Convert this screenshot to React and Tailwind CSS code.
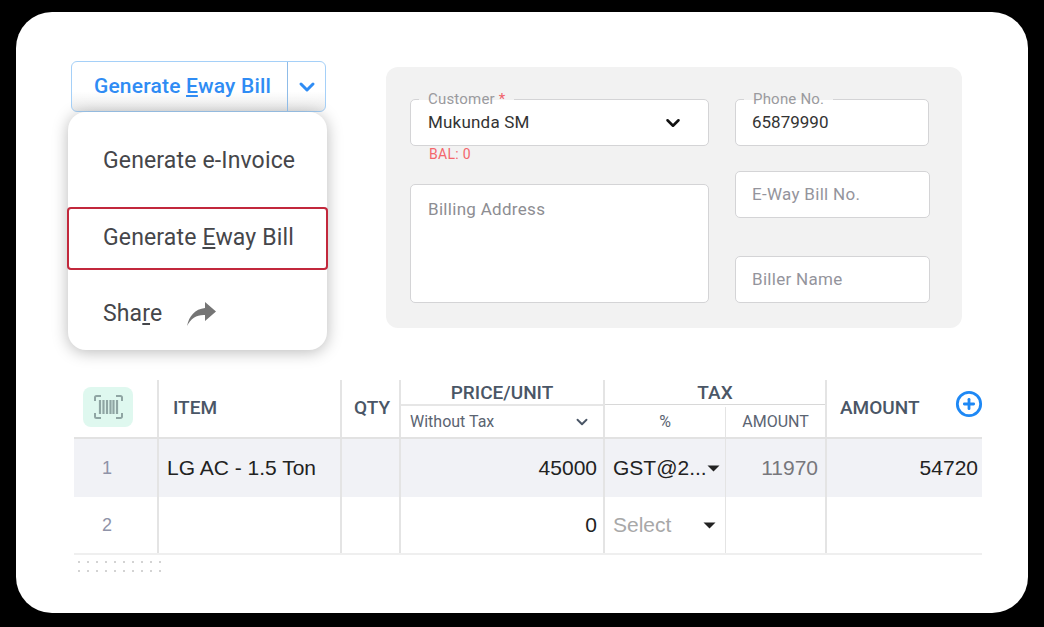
import { ChevronDown, CirclePlus } from 'lucide-react'

const COLS = 'grid-cols-[85px_183px_59px_204px_121px_101px_155px]'

const Caret = () => (
  <svg width="13" height="7" viewBox="0 0 13 7" className="shrink-0">
    <path d="M0.500 0.500h12L6.500 6.500z" fill="#222" />
  </svg>
)

const ScanIcon = () => (
  <svg width="29" height="24" viewBox="0 0 29 24" fill="none" stroke="#8fa5a3" strokeWidth="2">
    <path d="M1 6V2.500A1.500 1.500 0 0 1 2.500 1H7M22 1h4.500A1.500 1.500 0 0 1 28 2.500V6M1 18v3.500A1.500 1.500 0 0 0 2.500 23H7M22 23h4.500a1.500 1.500 0 0 0 1.500-1.500V18" />
    <path d="M6 5v14M9.500 5v14M13 5v14M16.500 5v14M19.500 5v14M23 5v14" strokeWidth="2.200" />
  </svg>
)

const ShareArrow = () => (
  <svg width="30" height="24" viewBox="0 0 30 24" fill="#757575" className="ml-[25px]">
    <path d="M18 0L29 9.500L18 19V13C10 12.500 4 16 0 24C2 14 8 7 18 6Z" />
  </svg>
)

const Label = ({ children }) => (
  <span className="absolute left-[8px] top-[-9px] bg-[linear-gradient(#f2f2f2_9px,#fff_9px)] px-[9px] text-[15px] leading-[17px] tracking-[0.2px] text-[#9a9a9e]">
    {children}
  </span>
)

const Field = ({ label, value, placeholder, className = '' }) => (
  <div className={`relative flex items-center rounded-[5px] border border-[#d4d4d6] bg-white pl-[16px] text-[17px] ${className}`}>
    {label && <Label>{label}</Label>}
    {value ? <span className="mt-[1px] text-[#333]">{value}</span> : <span className="tracking-[0.3px] text-[#94949c]">{placeholder}</span>}
  </div>
)

const Cell = ({ className = '', children }) => (
  <div className={`flex items-center border-r-2 border-[#e4e4e4] font-['Liberation_Sans',sans-serif] text-[21px] ${className}`}>
    {children}
  </div>
)

export default function App() {
  return (
    <div className="h-[627px] w-[1044px] overflow-hidden bg-black pl-[16px] pt-[12px] font-['Roboto',sans-serif]">
      <div className="h-[601px] w-[1012px] rounded-[36px] bg-white pt-[49px]">
        <div className="flex pl-[52px]">
          <div className="w-[259px]">
            <div className="ml-[3px] flex h-[51px] w-[255px] rounded-[6px] border border-[#a5d0f8] bg-gradient-to-b from-white from-60% to-[#ebebeb] text-[#2f8cf4]">
              <div className="flex flex-1 items-center justify-center pl-[6px] text-[21px] font-medium tracking-[0.2px]">
                <span>Generate <u>E</u>way Bill</span>
              </div>
              <div className="flex w-[38px] items-center justify-center border-l border-[#8fbce8]">
                <ChevronDown size={24} strokeWidth={3} color="#2f8cf4" />
              </div>
            </div>
            <div className="flex h-[238px] flex-col rounded-[18px] bg-white text-[23px] tracking-[0.15px] text-[#45464a] shadow-[0_2px_16px_rgba(0,0,0,0.28)]">
              <div className="flex h-[96px] items-center pl-[35px] pt-[2px]">Generate e-Invoice</div>
              <div className="-mx-[1px] -mt-[1px] flex h-[63px] items-center rounded-[4px] border-2 border-[#c2283c] pb-[1px] pl-[34px]">
                <span>Generate <u>E</u>way Bill</span>
              </div>
              <div className="flex flex-1 items-center pl-[35px] pt-[8px]">
                <span>Sha<u>r</u>e</span>
                <ShareArrow />
              </div>
            </div>
          </div>

          <div className="ml-[59px] mt-[6px] flex h-[261px] w-[576px] gap-[26px] rounded-[12px] bg-[#f2f2f2] pl-[24px] pt-[32px]">
            <div className="flex w-[299px] flex-col">
              <div className="relative flex h-[47px] items-center justify-between rounded-[5px] border border-[#d4d4d6] bg-white pl-[17px] pr-[24px] text-[17px] tracking-[0.2px] text-[#333]">
                <Label>
                  Customer <span className="text-[#f0616a]">*</span>
                </Label>
                <span className="mt-[1px]">Mukunda SM</span>
                <ChevronDown size={22} strokeWidth={2.800} color="#111" />
              </div>
              <div className="h-[38px] pl-[19px] text-[14px] leading-[16px] tracking-[0.3px] text-[#f4666c]">BAL: 0</div>
              <div className="h-[119px] rounded-[5px] border border-[#d4d4d6] bg-white pl-[17px] pt-[15px] text-[17px] leading-[19px] tracking-[0.3px] text-[#8d8d92]">
                Billing Address
              </div>
            </div>
            <div className="flex w-[195px] flex-col">
              <Field label="Phone No." value="65879990" className="h-[47px] w-[194px]" />
              <Field placeholder="E-Way Bill No." className="mt-[25px] h-[47px]" />
              <Field placeholder="Biller Name" className="mt-[38px] h-[47px]" />
            </div>
          </div>
        </div>

        <div className="ml-[58px] mt-[30px] w-[908px]">
          <div className={`grid h-[59px] ${COLS} border-b-2 border-[#e2e2e2] text-[19px] font-medium text-[#4a5666]`}>
            <div className="flex items-center border-r-2 border-[#e4e4e4] pl-[9px]">
              <div className="mt-[-3px] flex h-[40px] w-[50px] items-center justify-center rounded-[8px] bg-[#dff8ef]">
                <ScanIcon />
              </div>
            </div>
            <div className="flex items-center border-r-2 border-[#e4e4e4] pl-[14px]">ITEM</div>
            <div className="flex items-center justify-center border-r-2 border-[#e4e4e4] pl-[3px]">QTY</div>
            <div className="flex flex-col border-r-2 border-[#e4e4e4]">
              <div className="flex h-[26px] items-end justify-center border-b-2 border-[#e6e6e6] leading-[22px]">PRICE/UNIT</div>
              <div className="flex flex-1 items-center justify-between pl-[9px] pr-[12px] pt-[1px] text-[16px] font-normal text-[#5b6472]">
                Without Tax
                <ChevronDown size={18} strokeWidth={2.500} color="#4a5666" />
              </div>
            </div>
            <div className="col-span-2 flex flex-col border-r-2 border-[#e4e4e4]">
              <div className="flex h-[25px] items-end justify-center border-b border-[#d8d8d8] leading-[22px]">TAX</div>
              <div className="flex flex-1 pt-[2px] text-[16px] font-normal text-[#5b6472]">
                <div className="flex w-[121px] items-center justify-center border-r border-[#e4e4e4]">%</div>
                <div className="flex flex-1 items-center justify-center">AMOUNT</div>
              </div>
            </div>
            <div className="flex items-center justify-between pl-[13px]">
              AMOUNT
              <CirclePlus size={28} strokeWidth={2.400} color="#1e88f5" className="mr-[-1px] mt-[-10px]" />
            </div>
          </div>

          <div className={`grid h-[58px] ${COLS} bg-[#f1f2f6] text-[#222]`}>
            <Cell className="justify-center pr-[17px] !text-[18px] text-[#8f93a8]">1</Cell>
            <Cell className="pl-[8px]">LG AC - 1.5 Ton</Cell>
            <Cell />
            <Cell className="justify-end pr-[6px]">45000</Cell>
            <Cell className="justify-between pl-[8px] pr-[9px] !border-r">
              <span className="whitespace-nowrap">GST@2...</span>
              <Caret />
            </Cell>
            <Cell className="justify-end pr-[7px] text-[#77777c]">11970</Cell>
            <div className="flex items-center justify-end pr-[4px] font-['Liberation_Sans',sans-serif] text-[21px]">54720</div>
          </div>

          <div className={`grid h-[58px] ${COLS} border-b-2 border-[#efefef] text-[#222]`}>
            <Cell className="justify-center pr-[17px] !text-[18px] text-[#8f93a8]">2</Cell>
            <Cell />
            <Cell />
            <Cell className="justify-end pr-[6px]">0</Cell>
            <Cell className="justify-between pl-[8px] pr-[9px] !border-r text-[#a8a8a8]">
              <span>Select</span>
              <Caret />
            </Cell>
            <Cell />
            <div />
          </div>

          <div className="ml-[4px] mt-[6px] grid w-[83px] grid-cols-[repeat(10,2px)] justify-between gap-y-[7px]">
            {Array.from({ length: 20 }).map((_, i) => (
              <span key={i} className="h-[2px] w-[2px] rounded-full bg-[#c4c4c4]" />
            ))}
          </div>
        </div>
      </div>
    </div>
  )
}
